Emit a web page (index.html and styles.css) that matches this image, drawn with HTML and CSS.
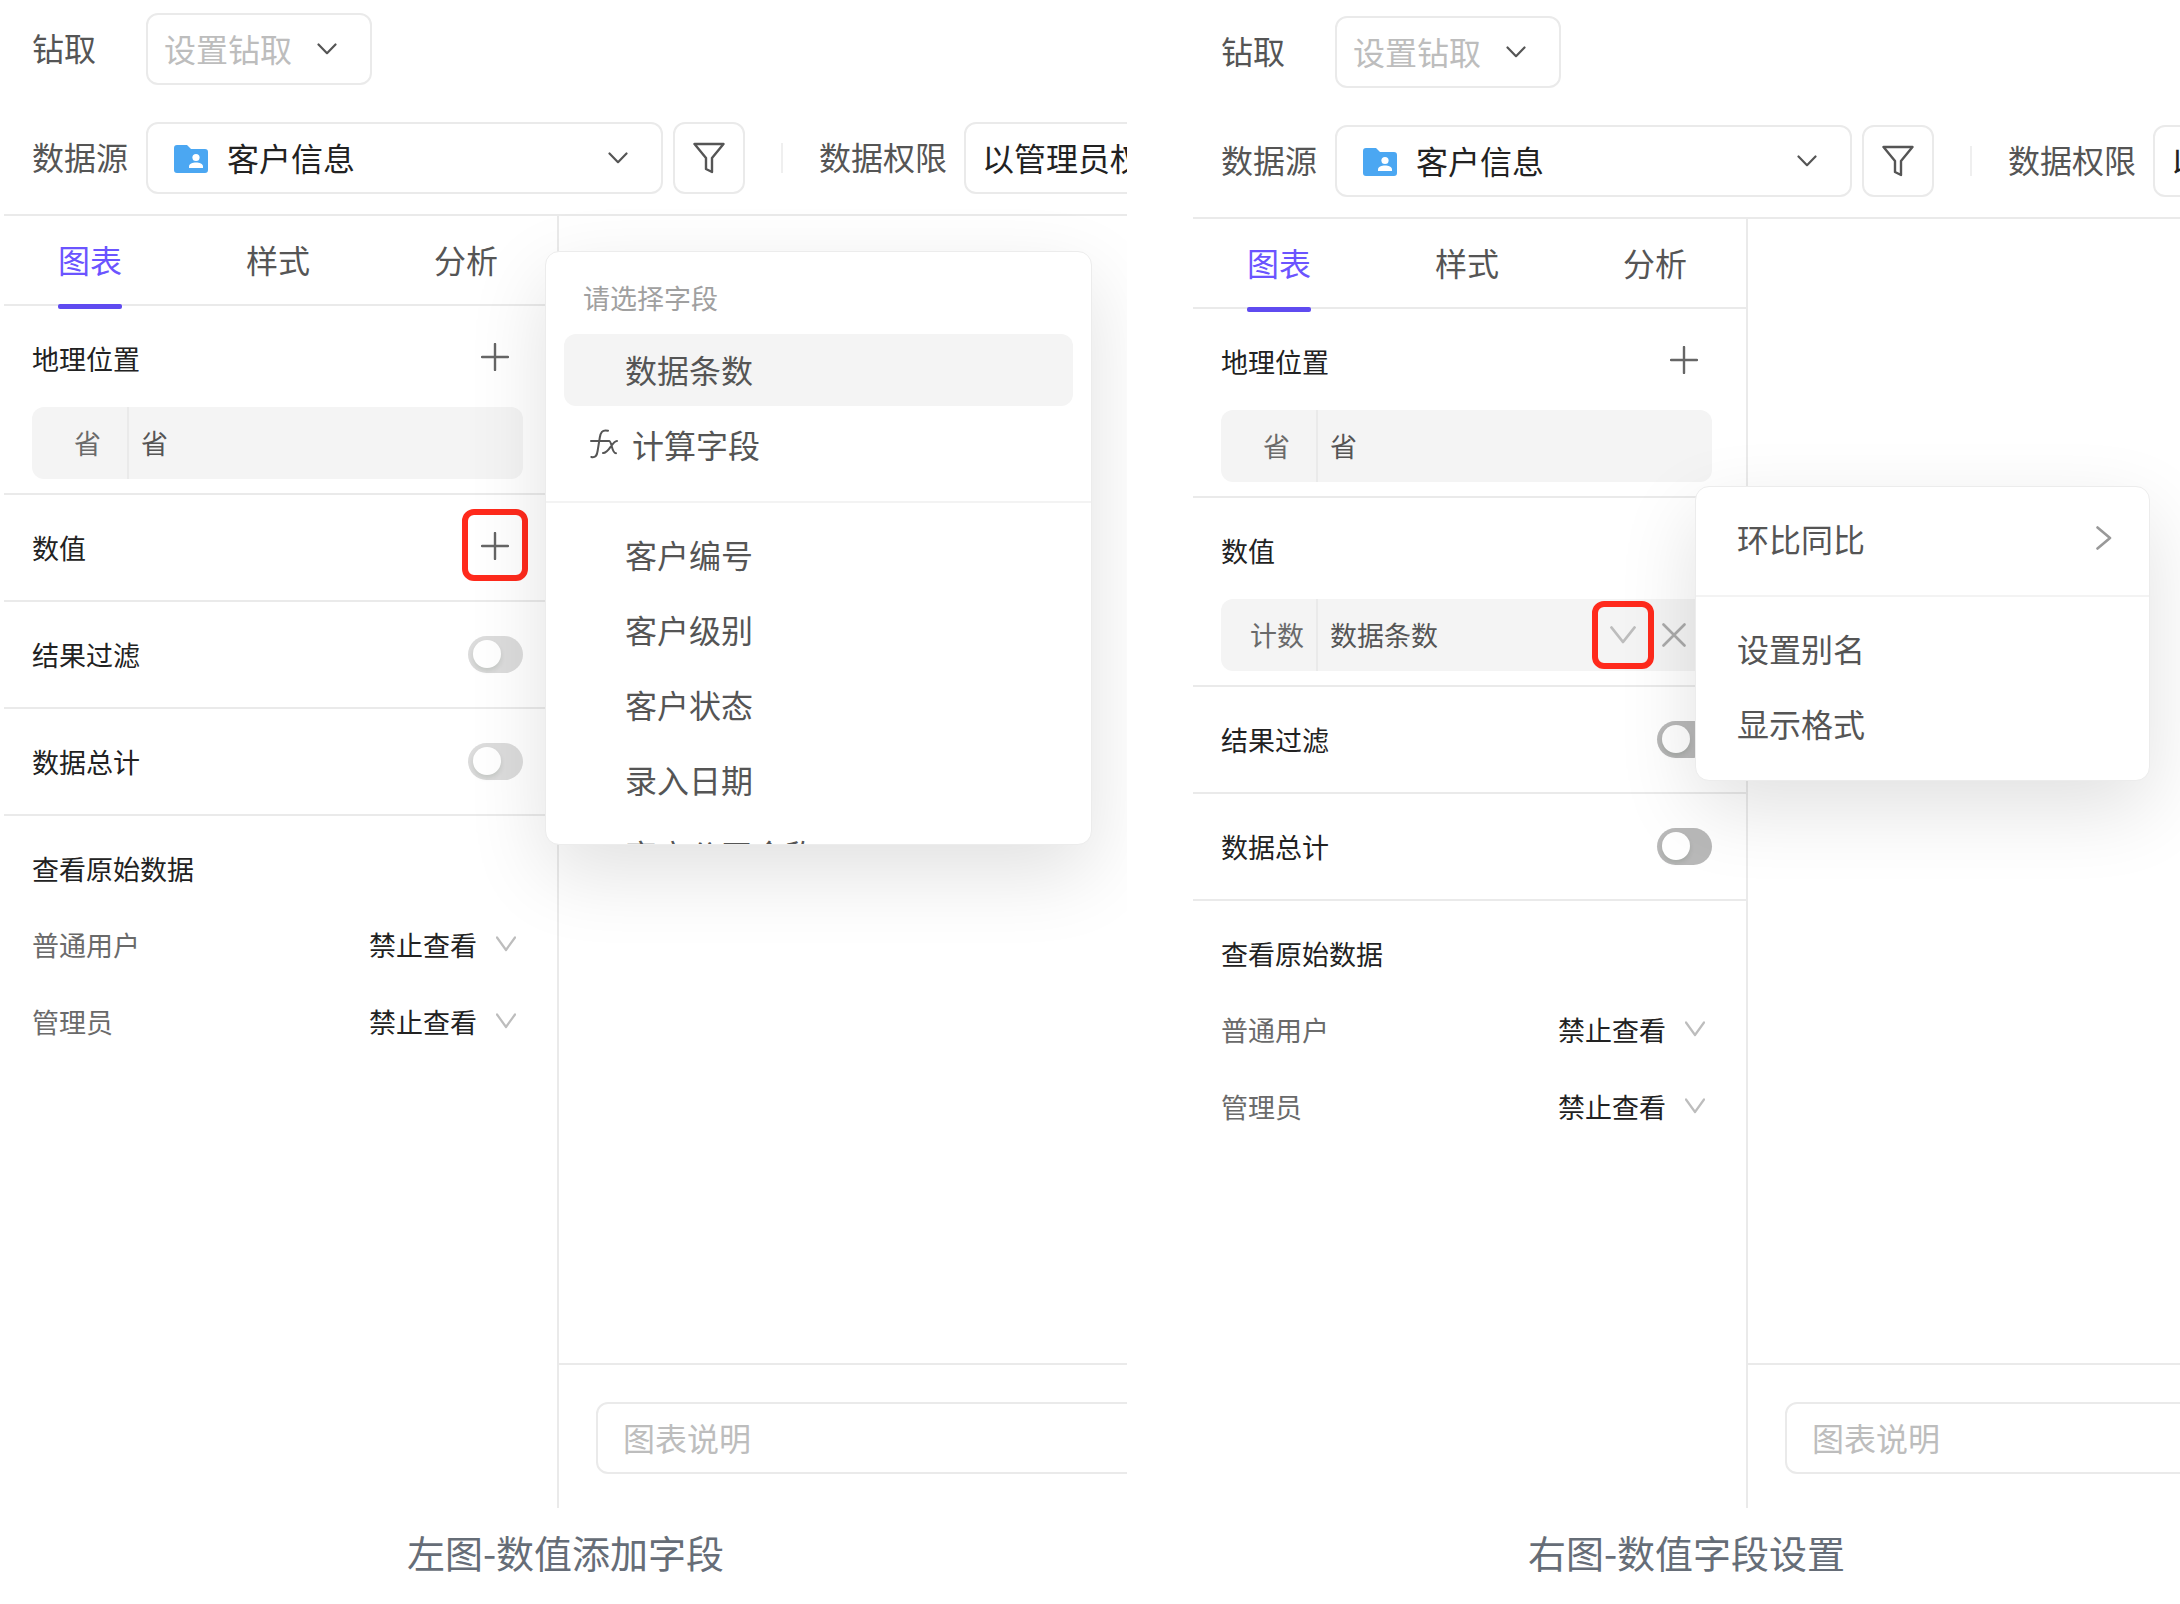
FILE: index.html
```html
<!DOCTYPE html>
<html lang="zh-CN">
<head>
<meta charset="utf-8">
<meta name="viewport" content="width=device-width, initial-scale=1">
<title>数值字段</title>
<link rel="stylesheet" href="styles.css">
</head>
<body>
<svg class="sprite" aria-hidden="true">
  <symbol id="i-caret" viewBox="0 0 20 12"><path d="M1.500 1.500 10 10.200 18.500 1.500" fill="none" stroke="currentColor" stroke-width="2.200" stroke-linecap="round" stroke-linejoin="round"/></symbol>
  <symbol id="i-arrow" viewBox="0 0 20 16"><path d="M1 1.500 10 14 19 1.500" fill="none" stroke="currentColor" stroke-width="2.200" stroke-linecap="round" stroke-linejoin="round"/></symbol>
  <symbol id="i-down" viewBox="0 0 26 18"><path d="M1.500 1.500 13 16 24.500 1.500" fill="none" stroke="currentColor" stroke-width="2.800" stroke-linecap="round" stroke-linejoin="round"/></symbol>
  <symbol id="i-right" viewBox="0 0 16 24"><path d="M1.500 1.500 14 12 1.500 22.500" fill="none" stroke="currentColor" stroke-width="2.600" stroke-linecap="round" stroke-linejoin="round"/></symbol>
  <symbol id="i-close" viewBox="0 0 24 24"><path d="M1.500 1.500 22.500 22.500M22.500 1.500 1.500 22.500" fill="none" stroke="currentColor" stroke-width="2.600" stroke-linecap="round"/></symbol>
  <symbol id="i-plus" viewBox="0 0 28 28"><path d="M14 1V27M1 14H27" fill="none" stroke="currentColor" stroke-width="2.400" stroke-linecap="round"/></symbol>
  <symbol id="i-filter" viewBox="0 0 32 32"><path d="M1.500 2H30.500L19 16V30L13 27V16Z" fill="none" stroke="currentColor" stroke-width="2.400" stroke-linejoin="round"/></symbol>
  <symbol id="i-folder" viewBox="0 0 34 28"><path d="M3 0H13L17 4H31A3 3 0 0 1 34 7V25A3 3 0 0 1 31 28H3A3 3 0 0 1 0 25V3A3 3 0 0 1 3 0Z" fill="#4ba7f2"/><circle cx="22" cy="12.500" r="3.600" fill="#fff"/><path d="M15 23V21.500C15 18.800 18.500 17.600 22 17.600S29 18.800 29 21.500V23Z" fill="#fff"/></symbol>
  <symbol id="i-fx" viewBox="0 0 28 30"><path d="M18 1.800C12 .200 10.500 4 9.800 8.500L7.600 22C7 26.500 5.500 28.800 1.300 28M1 12H19C22 12 21.500 24 26 24.200M27 12C22 12 19 24.500 13 24" fill="none" stroke="currentColor" stroke-width="2" stroke-linecap="round"/></symbol>
</svg>

<main class="page">
  <figure class="shot">
    <div class="panel">
      <header class="toolbar">
        <div class="bar">
          <label class="bar-label" for="drill-a">钻取</label>
          <div class="picker picker-drill">
            <select id="drill-a"><option>设置钻取</option></select>
            <svg class="caret"><use href="#i-caret"/></svg>
          </div>
        </div>
        <div class="bar">
          <label class="bar-label" for="source-a">数据源</label>
          <div class="picker picker-source">
            <svg class="folder"><use href="#i-folder"/></svg>
            <select id="source-a"><option>客户信息</option></select>
            <svg class="caret"><use href="#i-caret"/></svg>
          </div>
          <button class="filter" type="button" aria-label="过滤"><svg><use href="#i-filter"/></svg></button>
          <span class="rule"></span>
          <label class="scope-label" for="scope-a">数据权限</label>
          <div class="picker picker-scope"><select id="scope-a"><option>以管理员权限查看</option></select></div>
        </div>
      </header>
      <div class="work">
        <aside class="side">
          <nav class="tabs">
            <button class="tab tab-on" type="button">图表</button>
            <button class="tab" type="button">样式</button>
            <button class="tab" type="button">分析</button>
          </nav>
          <section class="block">
            <div class="line"><h2>地理位置</h2><button class="plus" type="button" aria-label="添加"><svg><use href="#i-plus"/></svg></button></div>
            <div class="field"><span class="field-kind">省</span><span class="field-name">省</span></div>
          </section>
          <section class="block">
            <div class="line"><h2>数值</h2><button class="plus plus-marked" type="button" aria-label="添加"><svg><use href="#i-plus"/></svg></button></div>
          </section>
          <section class="block">
            <div class="line"><label class="name" for="result-a">结果过滤</label><input class="switch" id="result-a" type="checkbox"></div>
          </section>
          <section class="block">
            <div class="line"><label class="name" for="total-a">数据总计</label><input class="switch" id="total-a" type="checkbox"></div>
          </section>
          <section class="block block-last">
            <div class="line"><h2>查看原始数据</h2></div>
            <div class="line"><label class="role" for="user-a">普通用户</label><div class="access"><select id="user-a"><option>禁止查看</option></select><svg><use href="#i-arrow"/></svg></div></div>
            <div class="line"><label class="role" for="admin-a">管理员</label><div class="access"><select id="admin-a"><option>禁止查看</option></select><svg><use href="#i-arrow"/></svg></div></div>
          </section>
        </aside>
        <div class="canvas">
          <footer class="note"><input type="text" placeholder="图表说明" aria-label="图表说明"></footer>
          <div class="popup popup-fields">
            <p class="popup-title">请选择字段</p>
            <ul class="menu menu-first">
              <li><button class="item item-on" type="button">数据条数</button></li>
              <li><button class="item item-fx" type="button"><svg><use href="#i-fx"/></svg>计算字段</button></li>
            </ul>
            <ul class="menu">
              <li><button class="item" type="button">客户编号</button></li>
              <li><button class="item" type="button">客户级别</button></li>
              <li><button class="item" type="button">客户状态</button></li>
              <li><button class="item" type="button">录入日期</button></li>
              <li><button class="item" type="button">客户公司全称</button></li>
            </ul>
          </div>
        </div>
      </div>
    </div>
    <figcaption>左图-数值添加字段</figcaption>
  </figure>

  <figure class="shot">
    <div class="panel panel-low">
      <header class="toolbar">
        <div class="bar">
          <label class="bar-label" for="drill-b">钻取</label>
          <div class="picker picker-drill">
            <select id="drill-b"><option>设置钻取</option></select>
            <svg class="caret"><use href="#i-caret"/></svg>
          </div>
        </div>
        <div class="bar">
          <label class="bar-label" for="source-b">数据源</label>
          <div class="picker picker-source">
            <svg class="folder"><use href="#i-folder"/></svg>
            <select id="source-b"><option>客户信息</option></select>
            <svg class="caret"><use href="#i-caret"/></svg>
          </div>
          <button class="filter" type="button" aria-label="过滤"><svg><use href="#i-filter"/></svg></button>
          <span class="rule"></span>
          <label class="scope-label" for="scope-b">数据权限</label>
          <div class="picker picker-scope"><select id="scope-b"><option>以管理员权限查看</option></select></div>
        </div>
      </header>
      <div class="work">
        <aside class="side">
          <nav class="tabs">
            <button class="tab tab-on" type="button">图表</button>
            <button class="tab" type="button">样式</button>
            <button class="tab" type="button">分析</button>
          </nav>
          <section class="block">
            <div class="line"><h2>地理位置</h2><button class="plus" type="button" aria-label="添加"><svg><use href="#i-plus"/></svg></button></div>
            <div class="field"><span class="field-kind">省</span><span class="field-name">省</span></div>
          </section>
          <section class="block">
            <div class="line"><h2>数值</h2></div>
            <div class="field">
              <span class="field-kind">计数</span><span class="field-name">数据条数</span>
              <button class="field-more" type="button" aria-label="设置"><svg><use href="#i-down"/></svg></button>
              <button class="field-close" type="button" aria-label="移除"><svg><use href="#i-close"/></svg></button>
            </div>
          </section>
          <section class="block">
            <div class="line"><label class="name" for="result-b">结果过滤</label><input class="switch switch-dark" id="result-b" type="checkbox"></div>
          </section>
          <section class="block">
            <div class="line"><label class="name" for="total-b">数据总计</label><input class="switch switch-dark" id="total-b" type="checkbox"></div>
          </section>
          <section class="block block-last">
            <div class="line"><h2>查看原始数据</h2></div>
            <div class="line"><label class="role" for="user-b">普通用户</label><div class="access"><select id="user-b"><option>禁止查看</option></select><svg><use href="#i-arrow"/></svg></div></div>
            <div class="line"><label class="role" for="admin-b">管理员</label><div class="access"><select id="admin-b"><option>禁止查看</option></select><svg><use href="#i-arrow"/></svg></div></div>
          </section>
        </aside>
        <div class="canvas">
          <footer class="note"><input type="text" placeholder="图表说明" aria-label="图表说明"></footer>
          <div class="popup popup-settings">
            <ul class="menu menu-first">
              <li><button class="item item-sub" type="button">环比同比<svg><use href="#i-right"/></svg></button></li>
            </ul>
            <ul class="menu">
              <li><button class="item" type="button">设置别名</button></li>
              <li><button class="item" type="button">显示格式</button></li>
            </ul>
          </div>
        </div>
      </div>
    </div>
    <figcaption>右图-数值字段设置</figcaption>
  </figure>
</main>
</body>
</html>
```

FILE: styles.css
```css
:root {
  --line: #eaeaea;
  --ink: #222;
  --text: #555;
  --faint: #bdbdbd;
  --accent: #5f4bf0;
  --mark: #ff2a1c;
}

* {
  box-sizing: border-box;
}

body {
  margin: 0;
  background: #fff;
  color: var(--text);
  font-family: "Noto Sans CJK SC", "Noto Sans", sans-serif;
  font-size: 32px;
  line-height: 40px;
}

button,
select,
input {
  margin: 0;
  padding: 0;
  border: 0;
  background: none;
  color: inherit;
  font: inherit;
  appearance: none;
}

h2,
p,
ul,
figure {
  margin: 0;
  padding: 0;
}

h2 {
  font-size: inherit;
  font-weight: 400;
}

ul {
  list-style: none;
}

svg {
  display: block;
  flex: none;
}

.sprite {
  position: absolute;
  width: 0;
  height: 0;
}

.page {
  display: grid;
  grid-template-columns: minmax(0, 1123fr) minmax(0, 987fr);
  column-gap: 66px;
  min-height: 100vh;
  padding-left: 4px;
}

.shot {
  display: flex;
  flex-direction: column;
}

.panel {
  display: flex;
  flex: 1;
  flex-direction: column;
  overflow: hidden;
}

.panel-low {
  padding-top: 3px;
}

figcaption {
  padding: 20px 0 28px;
  color: #666d77;
  font-size: 38px;
  line-height: 48px;
  text-align: center;
}

/* Toolbar */

.toolbar {
  display: flex;
  flex-direction: column;
  gap: 37px;
  padding: 13px 0 20px 28px;
  border-bottom: 2px solid var(--line);
}

.bar {
  display: flex;
  align-items: center;
}

.bar-label,
.scope-label {
  flex: none;
  padding-bottom: 4px;
}

.bar-label {
  width: 96px;
  margin-right: 18px;
}

.scope-label {
  margin-right: 17px;
}

.picker {
  position: relative;
  flex: none;
}

.picker select {
  width: 100%;
  height: 72px;
  padding-bottom: 2px;
  padding-left: 16px;
  border: 2px solid var(--line);
  border-radius: 12px;
  color: var(--ink);
}

.picker-drill {
  width: 226px;
}

.picker-drill select {
  color: var(--faint);
}

.picker-source {
  width: 517px;
}

.picker-source select {
  padding-left: 79px;
}

.picker-scope {
  width: 420px;
}

.caret {
  position: absolute;
  top: 30px;
  right: 35px;
  width: 20px;
  height: 12px;
  pointer-events: none;
}

.folder {
  position: absolute;
  top: 23px;
  left: 28px;
  width: 34px;
  height: 28px;
}

.filter {
  display: flex;
  flex: none;
  align-items: center;
  justify-content: center;
  width: 72px;
  height: 72px;
  margin-left: 10px;
  border: 2px solid var(--line);
  border-radius: 12px;
}

.filter svg {
  width: 32px;
  height: 32px;
}

.rule {
  flex: none;
  width: 2px;
  height: 30px;
  margin: 0 36px;
  background: #efefef;
}

/* Settings column */

.work {
  display: flex;
  flex: 1;
}

.side {
  flex: none;
  width: 555px;
  border-right: 2px solid var(--line);
  font-size: 27px;
  line-height: 36px;
}

.tabs {
  display: flex;
  gap: 124px;
  padding-left: 54px;
  border-bottom: 2px solid var(--line);
  font-size: 32px;
}

.tab {
  position: relative;
  height: 88px;
  padding-bottom: 2px;
}

.tab-on {
  color: #6b54ff;
}

.tab-on::after {
  content: "";
  position: absolute;
  right: 0;
  bottom: -5px;
  left: 0;
  height: 5px;
  border-radius: 2px;
  background: var(--accent);
}

.block {
  padding: 34px 34px 35px 28px;
  border-bottom: 2px solid var(--line);
  color: var(--ink);
}

.block:has(.field) {
  padding-bottom: 14px;
}

.block-last {
  display: flex;
  flex-direction: column;
  gap: 41px;
  border-bottom: 0;
}

.line {
  display: flex;
  align-items: center;
  justify-content: space-between;
  height: 36px;
}

.line h2,
.name {
  padding-top: 2px;
}

.plus {
  position: relative;
  width: 28px;
  height: 28px;
  margin: 0 14px 2px 0;
  color: #666;
}

.plus svg {
  width: 28px;
  height: 28px;
}

.plus-marked::after {
  content: "";
  position: absolute;
  inset: -23px -19px -21px;
  border: 6px solid var(--mark);
  border-radius: 12px;
}

.field {
  display: flex;
  align-items: center;
  height: 72px;
  margin-top: 31px;
  border-radius: 12px;
  background: #f4f4f4;
  color: var(--text);
}

.field-kind {
  width: 97px;
  padding-right: 12px;
  border-right: 2px solid var(--line);
  color: #6a6a6a;
  line-height: 72px;
  text-align: right;
}

.field-kind:not(:has(+ .field-name + button)) {
  padding-right: 26px;
}

.field-name {
  flex: 1;
  padding-left: 12px;
}

.field-more {
  position: relative;
  margin-right: 26px;
  color: var(--faint);
}

.field-more svg {
  width: 26px;
  height: 18px;
}

.field-more::after {
  content: "";
  position: absolute;
  inset: -25px -18px;
  border: 6px solid var(--mark);
  border-radius: 12px;
}

.field-close {
  margin-right: 26px;
  color: #aaa;
}

.field-close svg {
  width: 24px;
  height: 24px;
}

.switch {
  width: 55px;
  height: 37px;
  padding: 4px 5px;
  border-radius: 19px;
  background: #dcdcdc;
}

.switch::before {
  content: "";
  display: block;
  width: 28px;
  height: 28px;
  border-radius: 50%;
  background: #fff;
  box-shadow: 0 3px 5px rgba(0, 35, 11, 0.1);
}

.switch-dark {
  background: #b9b9b9;
}

.role {
  color: #6a6a6a;
}

.access {
  position: relative;
}

.access select {
  height: 36px;
  padding-right: 46px;
}

.access svg {
  position: absolute;
  top: 9px;
  right: 7px;
  width: 20px;
  height: 16px;
  color: var(--faint);
  pointer-events: none;
}

/* Chart area */

.canvas {
  position: relative;
  display: flex;
  flex: 1;
  flex-direction: column;
  justify-content: flex-end;
  min-width: 0;
}

.note {
  padding: 37px 0 34px 37px;
  border-top: 2px solid var(--line);
}

.note input {
  width: calc(100% + 24px);
  height: 72px;
  padding-bottom: 2px;
  padding-left: 25px;
  border: 2px solid var(--line);
  border-radius: 12px;
}

.note input::placeholder {
  color: var(--faint);
}

/* Popups */

.popup {
  position: absolute;
  overflow: hidden;
  border: 1px solid #ececec;
  border-radius: 14px;
  background: #fff;
  box-shadow: 0 28px 80px rgba(0, 0, 0, 0.12);
}

.popup-fields {
  top: 35px;
  left: -14px;
  width: 547px;
  max-height: 594px;
}

.popup-settings {
  top: 267px;
  left: -53px;
  width: 455px;
}

.popup-title {
  padding: 28px 37px 18px;
  color: #a0a0a0;
  font-size: 27px;
  line-height: 36px;
}

.menu {
  display: flex;
  flex-direction: column;
  gap: 3px;
  padding: 16px 18px 20px;
}

.menu-first {
  border-bottom: 2px solid #f3f3f3;
}

.popup-fields .menu-first {
  padding-top: 0;
}

.item {
  display: flex;
  align-items: center;
  width: 100%;
  height: 72px;
  padding: 0 19px 2px 23px;
  border-radius: 12px;
}

.popup-fields .item {
  padding-left: 61px;
}

.item-on {
  background: #f4f4f4;
}

.popup-fields .item-fx {
  gap: 14px;
  padding-left: 26px;
}

.item-fx svg {
  width: 28px;
  height: 30px;
}

.item-sub {
  justify-content: space-between;
}

.item-sub svg {
  width: 16px;
  height: 24px;
  color: #999;
}
```
